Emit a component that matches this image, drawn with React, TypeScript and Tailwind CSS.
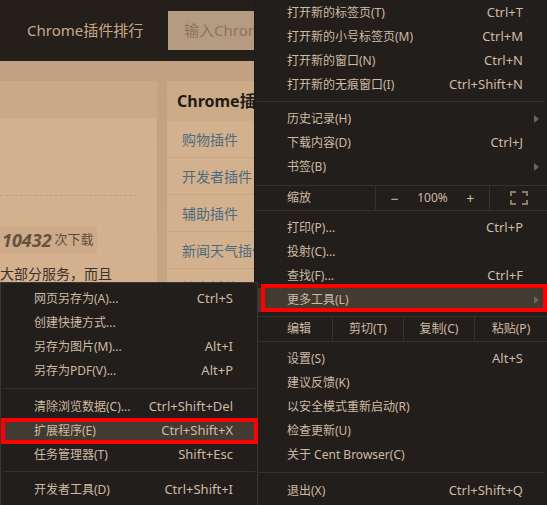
import React from "react";

type ItemProps = { label: string; shortcut?: string; arrow?: boolean; highlight?: boolean; sub?: boolean };

function Item({ label, shortcut, arrow, highlight, sub }: ItemProps) {
  return (
    <div
      className={`h-[24px] flex items-center ${sub ? "pl-[33px] pr-[24px]" : "pl-[32px] pr-[24px]"} ${highlight ? "bg-[#433a32]" : ""}`}
    >
      <span className="text-[12px] whitespace-nowrap">{label}</span>
      {shortcut && <span className="ml-auto text-[13px] whitespace-nowrap">{shortcut}</span>}
      {arrow && (
        <span className="ml-auto -mr-[16px] w-0 h-0 border-l-[5px] border-l-[#6f645a] border-y-[4px] border-y-transparent" />
      )}
    </div>
  );
}

function Sep({ h, top }: { h: string; top: string }) {
  return (
    <div className={`${h} ${top} mx-[2px]`}>
      <div className="h-px bg-[#39322c]" />
    </div>
  );
}

function FullscreenIcon() {
  return (
    <svg width="18" height="14" viewBox="0 0 18 14" fill="none" stroke="#8a7a68" strokeWidth="2">
      <path d="M1 5V1h5" />
      <path d="M12 1h5v4" />
      <path d="M17 9v4h-5" />
      <path d="M6 13H1V9" />
    </svg>
  );
}

export default function App() {
  return (
    <div className="w-[547px] h-[505px] relative overflow-hidden bg-[#cdab89] font-['Noto_Sans','Noto_Sans_CJK_SC',sans-serif]">
      {/* Background page */}
      <header className="h-[61px] bg-[#241f1b] flex items-center">
        <div className="pl-[27px] w-[168px] text-[15px] text-[#c9a98a] whitespace-nowrap">Chrome插件排行</div>
        <div className="w-[86px] h-[39px] bg-[#b59b7f] flex items-center pl-[16px] text-[15px] text-[#8b7661] whitespace-nowrap overflow-hidden">
          输入Chrom
        </div>
      </header>
      <div className="flex gap-[10px] pt-[20px] h-[444px] bg-gradient-to-b from-[#c2a182] to-[#c9a886]">
        <div className="w-[157px] flex flex-col">
          <div className="h-[37px] bg-[#caa987]" />
          <div className="flex-1 bg-[#d3b18f] pt-[77px]">
            <div className="w-[137px] border-t border-dashed border-[#bf9f7f]" />
            <div className="mt-[30px] w-[97px] h-[28px] rounded-[4px] bg-[#cdab89] flex items-center pl-[2px] gap-[3px]">
              <span className="text-[18px] font-bold italic text-[#66503f]">10432</span>
              <span className="text-[13px] text-[#5e4b3c]">次下载</span>
            </div>
            <div className="mt-[9px] text-[14px] text-[#3e3329] whitespace-nowrap">大部分服务，而且</div>
          </div>
        </div>
        <div className="w-[87px] flex flex-col overflow-hidden">
          <div className="h-[40px] bg-[#ccab89] flex items-center pl-[10px] text-[16px] font-bold text-[#1e1b18] whitespace-nowrap">
            Chrome插件分类
          </div>
          <div className="flex-1 bg-[#d3b18f]">
            {["购物插件", "开发者插件", "辅助插件", "新闻天气插件", "社交插件"].map((t) => (
              <div key={t} className="h-[37px] border-b border-[#c6a585] flex items-center pl-[15px] text-[14px] text-[#4e6b7e] whitespace-nowrap">
                {t}
              </div>
            ))}
          </div>
        </div>
      </div>

      {/* Main menu */}
      <div className="absolute left-[254px] top-0 w-[293px] h-[505px] bg-[#221e1b] border-l border-[#1a1714] text-[#cdbba4] pt-[1px]">
        <Item label="打开新的标签页(T)" shortcut="Ctrl+T" />
        <Item label="打开新的小号标签页(M)" shortcut="Ctrl+M" />
        <Item label="打开新的窗口(N)" shortcut="Ctrl+N" />
        <Item label="打开新的无痕窗口(I)" shortcut="Ctrl+Shift+N" />
        <Sep h="h-[10px]" top="pt-[4px]" />
        <Item label="历史记录(H)" arrow />
        <Item label="下载内容(D)" shortcut="Ctrl+J" />
        <Item label="书签(B)" arrow />
        <div className="h-[6px]" />
        <div className="h-[26px] flex border-y border-[#39322c]">
          <div className="w-[121px] flex items-center pl-[32px] border-r border-[#39322c] text-[12px]">缩放</div>
          <div className="w-[114px] grid grid-cols-3 items-center text-center border-r border-[#39322c] text-[12px]">
            <span className="text-[14px]">−</span>
            <span>100%</span>
            <span className="text-[14px]">+</span>
          </div>
          <div className="flex-1 flex items-center justify-center">
            <FullscreenIcon />
          </div>
        </div>
        <div className="h-[5px]" />
        <Item label="打印(P)..." shortcut="Ctrl+P" />
        <Item label="投射(C)..." />
        <Item label="查找(F)..." shortcut="Ctrl+F" />
        <Item label="更多工具(L)" arrow highlight />
        <div className="h-[4px]" />
        <div className="h-[26px] flex border-y border-[#39322c] text-[12px]">
          <div className="w-[78px] flex items-center pl-[32px] border-r border-[#39322c]">编辑</div>
          <div className="w-[71px] flex items-center justify-center border-r border-[#39322c]">剪切(T)</div>
          <div className="w-[71px] flex items-center justify-center border-r border-[#39322c]">复制(C)</div>
          <div className="flex-1 flex items-center justify-center">粘贴(P)</div>
        </div>
        <div className="h-[5px]" />
        <Item label="设置(S)" shortcut="Alt+S" />
        <Item label="建议反馈(K)" />
        <Item label="以安全模式重新启动(R)" />
        <Item label="检查更新(U)" />
        <Item label="关于 Cent Browser(C)" />
        <Sep h="h-[12px]" top="pt-[5px]" />
        <Item label="退出(X)" shortcut="Ctrl+Shift+Q" />

        <div className="absolute left-[6px] top-[284px] right-0 h-[28px] border-[4px] border-[#ff0000]" />
      </div>

      {/* Submenu */}
      <div className="absolute left-0 top-[282px] w-[258px] h-[240px] z-10 bg-[#221e1b] border border-[#3d3731] text-[#cdbba4] pt-[4px]">
        <Item sub label="网页另存为(A)..." shortcut="Ctrl+S" />
        <Item sub label="创建快捷方式..." />
        <Item sub label="另存为图片(M)..." shortcut="Alt+I" />
        <Item sub label="另存为PDF(V)..." shortcut="Alt+P" />
        <Sep h="h-[12px]" top="pt-[5px]" />
        <Item sub label="清除浏览数据(C)..." shortcut="Ctrl+Shift+Del" />
        <Item sub label="扩展程序(E)" shortcut="Ctrl+Shift+X" highlight />
        <Item sub label="任务管理器(T)" shortcut="Shift+Esc" />
        <Sep h="h-[11px]" top="pt-[4px]" />
        <Item sub label="开发者工具(D)" shortcut="Ctrl+Shift+I" />

        <div className="absolute left-0 top-[135px] w-[257px] h-[26px] border-[4px] border-[#ff0000]" />
      </div>
    </div>
  );
}
